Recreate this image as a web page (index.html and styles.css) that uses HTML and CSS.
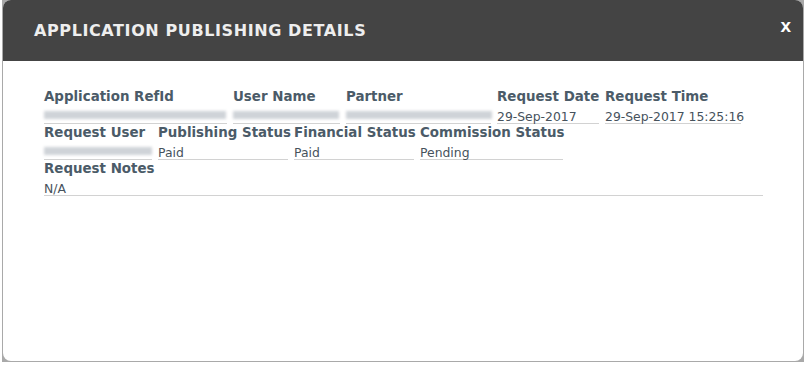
FILE: index.html
```html
<!DOCTYPE html>
<html lang="en">
<head>
  <meta charset="UTF-8">
  <meta name="viewport" content="width=device-width, initial-scale=1.0">
  <title>Application Publishing Details</title>
  <link rel="stylesheet" href="styles.css">
</head>
<body>
  <div class="frame">
    <div class="modal">
      <div class="modal_header">
        <h3 class="modal_title">APPLICATION PUBLISHING DETAILS</h3>
        <span class="close">x</span>
      </div>
      <div class="modal_body">
        <div class="row">
          <div class="field w_ref">
            <label>Application RefId</label>
            <div class="value"><span class="blur b_ref"></span></div>
          </div>
          <div class="field w_user">
            <label>User Name</label>
            <div class="value"><span class="blur b_user"></span></div>
          </div>
          <div class="field w_partner">
            <label>Partner</label>
            <div class="value"><span class="blur b_partner"></span></div>
          </div>
          <div class="field w_date">
            <label>Request Date</label>
            <div class="value">29-Sep-2017</div>
          </div>
          <div class="field w_time">
            <label>Request Time</label>
            <div class="value">29-Sep-2017 15:25:16</div>
          </div>
        </div>
        <div class="row">
          <div class="field w_requser">
            <label>Request User</label>
            <div class="value"><span class="blur b_requser"></span></div>
          </div>
          <div class="field w_pub">
            <label>Publishing Status</label>
            <div class="value">Paid</div>
          </div>
          <div class="field w_fin">
            <label>Financial Status</label>
            <div class="value">Paid</div>
          </div>
          <div class="field w_comm">
            <label>Commission Status</label>
            <div class="value">Pending</div>
          </div>
        </div>
        <div class="row">
          <div class="field w_notes">
            <label>Request Notes</label>
            <div class="value">N/A</div>
          </div>
        </div>
      </div>
    </div>
  </div>
</body>
</html>
```

FILE: styles.css
```css
* {
  box-sizing: border-box;
  font-family: 'DejaVu Sans', 'Open Sans', sans-serif;
}

body {
  margin: 0;
  background: #fff;
}

.frame {
  margin-left: 2px;
  width: 802px;
  height: 362px;
  background: #a9a9a9;
  padding: 0 1px 1px 1px;
}

.modal {
  height: 100%;
  background: #fff;
  border-radius: 8px;
  overflow: hidden;
}

.modal_header {
  height: 61px;
  background: #444;
  display: flex;
  align-items: center;
  justify-content: space-between;
  padding: 0 12px 0 31px;
}

.modal_title {
  margin: 0;
  color: #eee;
  font-size: 16px;
  font-weight: 700;
  letter-spacing: 0.6px;
}

.close {
  align-self: flex-start;
  margin-top: 15px;
  color: #fff;
  font-family: 'Liberation Sans', sans-serif;
  font-size: 19px;
  font-weight: 700;
}

.modal_body {
  padding: 27px 0 0 41px;
}

.row {
  display: flex;
  gap: 6px;
}

.field label {
  display: block;
  color: #4b5b68;
  font-size: 13.4px;
  font-weight: 700;
  line-height: 18px;
  white-space: nowrap;
}

.field .value {
  height: 18px;
  border-bottom: 1px solid #d2d2d2;
  color: #46525c;
  font-size: 12.4px;
  line-height: 14px;
  padding-top: 4px;
  white-space: nowrap;
}

.blur {
  display: block;
  height: 8px;
  margin-top: 1px;
  background: #cfd3d8;
  filter: blur(1.5px);
}

.w_ref { width: 183px; }
.w_user { width: 107px; }
.w_partner { width: 145px; }
.w_date { width: 102px; }
.w_time { width: 136px; }

.w_requser { width: 108px; }
.w_pub { width: 130px; }
.w_fin { width: 120px; }
.w_comm { width: 143px; }

.w_notes { width: 719px; }

.b_ref { width: 182px; }
.b_user { width: 106px; }
.b_partner { width: 146px; }
.b_requser { width: 108px; }
```
